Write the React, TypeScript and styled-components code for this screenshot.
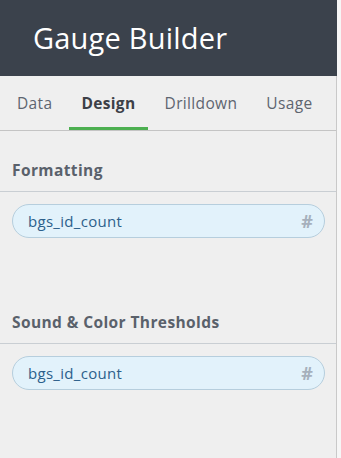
import React from "react";
import styled, { createGlobalStyle } from "styled-components";

const GlobalStyle = createGlobalStyle`
  body {
    margin: 0;
    background: #f6f6f6;
    font-family: "Open Sans", "Lato", sans-serif;
  }
`;

const Frame = styled.div`
  display: flex;
  width: 341px;
  height: 458px;
  overflow: hidden;
  background: #f6f6f6;
`;

const Panel = styled.div`
  width: 336px;
  flex-shrink: 0;
  display: flex;
  flex-direction: column;
  background: #efefef;
  border-right: 1px solid #c9c9c9;
`;

const Header = styled.header`
  height: 76px;
  background: #3b424c;
  margin-right: -1px;
  display: flex;
  align-items: center;
  padding: 0 0 2px 33px;
  box-sizing: border-box;
`;

const Title = styled.h1`
  margin: 0;
  font-size: 29px;
  font-weight: 400;
  color: #ffffff;
  letter-spacing: 0.2px;
`;

const Tabs = styled.nav`
  display: flex;
  gap: 5px;
  height: 55px;
  padding-left: 5px;
  border-bottom: 1px solid #c4c4c4;
  box-sizing: border-box;
`;

const Tab = styled.div<{ $active?: boolean }>`
  display: flex;
  align-items: center;
  padding: 3px 12px 0;
  font-size: 15.5px;
  letter-spacing: 0.35px;
  font-weight: ${(p) => (p.$active ? 700 : 400)};
  color: ${(p) => (p.$active ? "#3c4047" : "#5e656f")};
  border-bottom: 3px solid ${(p) => (p.$active ? "#4caf50" : "transparent")};
`;

const Section = styled.section<{ $gap?: number }>`
  display: flex;
  flex-direction: column;
  margin-top: ${(p) => p.$gap ?? 0}px;
`;

const SectionTitle = styled.h2`
  margin: 0;
  padding: 29px 12px 11px;
  line-height: 20px;
  font-size: 15.5px;
  letter-spacing: 0.4px;
  font-weight: 700;
  color: #5a616b;
  border-bottom: 1px solid #c9ced3;
`;

const Pill = styled.div`
  margin: 12px 11px 0 12px;
  height: 34px;
  display: flex;
  align-items: center;
  justify-content: space-between;
  padding: 0 11px 0 15px;
  background: #e2f2fb;
  border: 1px solid #b6cedd;
  border-radius: 17px;
  box-sizing: border-box;
`;

const PillLabel = styled.span`
  font-size: 15px;
  letter-spacing: 0.3px;
  color: #2c5f8b;
`;

const TypeMark = styled.span`
  font-size: 18px;
  font-weight: 700;
  color: #a6b0bc;
`;

const App: React.FC = () => {
  return (
    <>
      <GlobalStyle />
      <Frame>
        <Panel>
          <Header>
            <Title>Gauge Builder</Title>
          </Header>
          <Tabs>
            <Tab>Data</Tab>
            <Tab $active>Design</Tab>
            <Tab>Drilldown</Tab>
            <Tab>Usage</Tab>
          </Tabs>
          <Section>
            <SectionTitle>Formatting</SectionTitle>
            <Pill>
              <PillLabel>bgs_id_count</PillLabel>
              <TypeMark>#</TypeMark>
            </Pill>
          </Section>
          <Section $gap={45}>
            <SectionTitle>Sound &amp; Color Thresholds</SectionTitle>
            <Pill>
              <PillLabel>bgs_id_count</PillLabel>
              <TypeMark>#</TypeMark>
            </Pill>
          </Section>
        </Panel>
      </Frame>
    </>
  );
};

export default App;
